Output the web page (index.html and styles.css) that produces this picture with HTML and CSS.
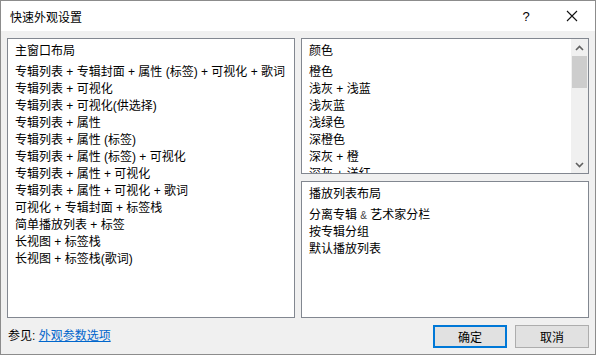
FILE: index.html
```html
<!DOCTYPE html>
<html lang="zh-CN">
<head>
<meta charset="utf-8">
<title>快速外观设置</title>
<link rel="stylesheet" href="styles.css">
</head>
<body>
<div class="window">
  <div class="titlebar">
    <span class="title">快速外观设置</span>
    <span class="help">?</span>
    <span class="close"><svg width="12" height="12" viewBox="0 0 12 12"><path d="M1 1 L11 11 M11 1 L1 11" stroke="#111" stroke-width="1.1" fill="none"/></svg></span>
  </div>
  <div class="content">
    <div class="panels">
      <div class="listbox main-list">
        <div class="head">主窗口布局</div>
        <div class="item">专辑列表 + 专辑封面 + 属性 (标签) + 可视化 + 歌词</div>
        <div class="item">专辑列表 + 可视化</div>
        <div class="item">专辑列表 + 可视化(供选择)</div>
        <div class="item">专辑列表 + 属性</div>
        <div class="item">专辑列表 + 属性 (标签)</div>
        <div class="item">专辑列表 + 属性 (标签) + 可视化</div>
        <div class="item">专辑列表 + 属性 + 可视化</div>
        <div class="item">专辑列表 + 属性 + 可视化 + 歌词</div>
        <div class="item">可视化 + 专辑封面 + 标签栈</div>
        <div class="item">简单播放列表 + 标签</div>
        <div class="item">长视图 + 标签栈</div>
        <div class="item">长视图 + 标签栈(歌词)</div>
      </div>
      <div class="right-col">
        <div class="listbox colors">
          <div class="scroll-content">
            <div class="head">颜色</div>
            <div class="item">橙色</div>
            <div class="item">浅灰 + 浅蓝</div>
            <div class="item">浅灰蓝</div>
            <div class="item">浅绿色</div>
            <div class="item">深橙色</div>
            <div class="item">深灰 + 橙</div>
            <div class="item">深灰 + 洋红</div>
          </div>
          <div class="scrollbar">
            <div class="arrow"><svg width="9" height="6" viewBox="0 0 9 6"><path d="M1 5 L4.5 1.5 L8 5" stroke="#606060" stroke-width="1.6" fill="none"/></svg></div>
            <div class="track"><div class="thumb"></div></div>
            <div class="arrow"><svg width="9" height="6" viewBox="0 0 9 6"><path d="M1 1 L4.5 4.5 L8 1" stroke="#606060" stroke-width="1.6" fill="none"/></svg></div>
          </div>
        </div>
        <div class="listbox playlist">
          <div class="head">播放列表布局</div>
          <div class="item">分离专辑 <span class="amp">&amp;</span> 艺术家分栏</div>
          <div class="item">按专辑分组</div>
          <div class="item">默认播放列表</div>
        </div>
      </div>
    </div>
    <div class="footer">
      <div class="see">参见: <a class="link" href="#">外观参数选项</a></div>
      <div class="buttons">
        <button class="btn default">确定</button>
        <button class="btn">取消</button>
      </div>
    </div>
  </div>
</div>
</body>
</html>
```

FILE: styles.css
```css
html, body {
  margin: 0;
  padding: 0;
  background: #ffffff;
}

body {
  font-family: "Liberation Sans", "Noto Sans CJK SC", sans-serif;
  font-size: 12px;
  color: #000;
}

.window {
  width: 596px;
  height: 355px;
  box-sizing: border-box;
  border: 1px solid #8c8c8c;
  display: flex;
  flex-direction: column;
  background: #f0f0f0;
}

.titlebar {
  height: 30px;
  background: #ffffff;
  display: flex;
  align-items: center;
  flex: none;
}

.title {
  padding-left: 9px;
  flex: 1;
  font-size: 12px;
}

.help {
  width: 46px;
  text-align: center;
  font-size: 13px;
  margin-right: 0;
}

.close {
  width: 46px;
  display: flex;
  justify-content: center;
  align-items: center;
}

.content {
  flex: 1;
  display: flex;
  flex-direction: column;
  padding: 7px 6px 0 6px;
}

.panels {
  display: grid;
  grid-template-columns: 288px 288px;
  column-gap: 6px;
  height: 280px;
}

.listbox {
  background: #ffffff;
  border: 1px solid #828790;
  box-sizing: border-box;
  overflow: hidden;
}

.main-list,
.playlist {
  padding: 4px 7px 0 7px;
}

.head {
  line-height: 17px;
  height: 17px;
  margin-bottom: 4px;
  white-space: nowrap;
}

.item {
  line-height: 17px;
  height: 17px;
  white-space: nowrap;
}

.right-col {
  display: grid;
  grid-template-rows: 136px 137px;
  row-gap: 7px;
}

.colors {
  display: flex;
}

.scroll-content {
  flex: 1;
  padding: 4px 7px 0 7px;
  overflow: hidden;
}

.scrollbar {
  width: 17px;
  background: #f0f0f0;
  display: flex;
  flex-direction: column;
  flex: none;
}

.arrow {
  height: 17px;
  display: flex;
  align-items: center;
  justify-content: center;
  flex: none;
}

.track {
  flex: 1;
  padding: 0 1px;
}

.thumb {
  height: 32px;
  background: #cdcdcd;
}

.amp {
  font-size: 10px;
  color: #444;
}

.footer {
  height: 36px;
  display: flex;
  align-items: flex-start;
  justify-content: space-between;
  padding-top: 7px;
  box-sizing: border-box;
}

.see {
  line-height: 23px;
  padding-left: 1px;
}

.link {
  color: #0066cc;
  text-decoration: underline;
}

.buttons {
  display: flex;
  gap: 8px;
  padding-right: 0;
}

.btn {
  width: 74px;
  height: 23px;
  box-sizing: border-box;
  background: #e1e1e1;
  border: 1px solid #adadad;
  font-family: "Liberation Sans", "Noto Sans CJK SC", sans-serif;
  font-size: 12px;
  color: #000;
  padding: 0;
  margin: 0;
}

.btn.default {
  border: 2px solid #0078d7;
}
```
